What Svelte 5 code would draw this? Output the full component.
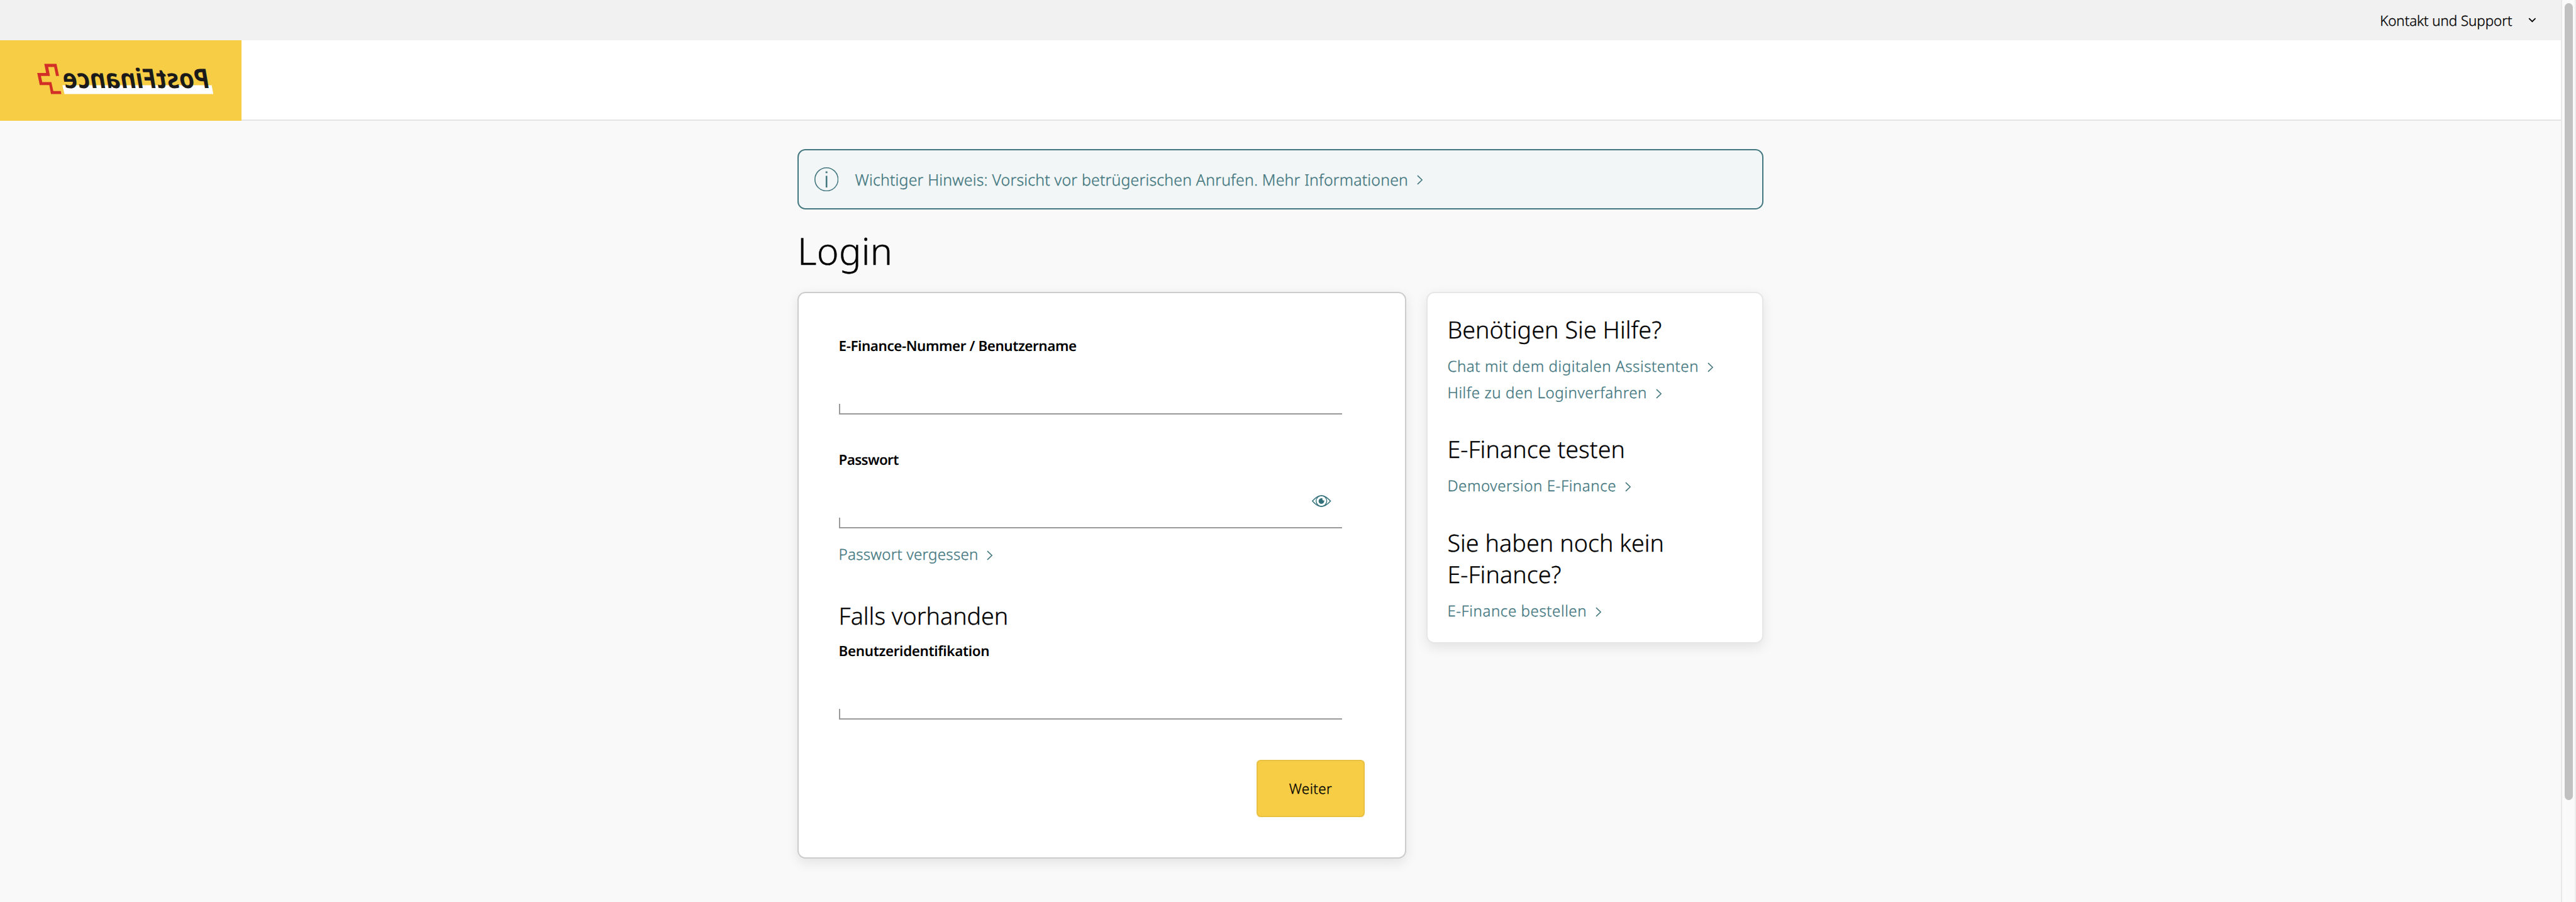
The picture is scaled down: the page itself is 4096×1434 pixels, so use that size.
<script>
  const help = [
    { title: ['Benötigen Sie Hilfe?'], links: ['Chat mit dem digitalen Assistenten', 'Hilfe zu den Loginverfahren'] },
    { title: ['E-Finance testen'], links: ['Demoversion E-Finance'] },
    { title: ['Sie haben noch kein', 'E-Finance?'], links: ['E-Finance bestellen'] }
  ];
</script>

{#snippet chevron()}
  <svg class="chevron" viewBox="0 0 12 20" aria-hidden="true">
    <path d="M1.2 1.4 L10.2 10 L1.2 18.6" fill="none" stroke="currentColor" stroke-width="2" />
  </svg>
{/snippet}

<div class="window">
  <div class="page">
    <div class="topbar">
      <span>Kontakt und Support</span>
      <svg class="down" viewBox="0 0 16 10" aria-hidden="true">
        <path d="M1.5 1.5 L8 7.8 L14.5 1.5" fill="none" stroke="currentColor" stroke-width="2.2" />
      </svg>
    </div>

    <header>
      <svg class="logo" viewBox="0 0 480 160" role="img" aria-label="PostFinance">
        <polygon fill="#fff" points="124,89.3 420.7,89.3 424,107 128,107" />
        <polygon
          fill="#d22f27"
          points="88,47 112.3,47 117.3,71 111.3,71 107.7,53 95.7,53 99.3,71 81.3,71 84,83 102,83 106,101 120.7,101 122,107 101.3,107 98,89 79,89 74,65 91.7,65"
        />
        <text
          class="wordmark"
          transform="translate(418.6 95.3) scale(-1 1) skewX(-9.5)"
          textLength="291"
          lengthAdjust="spacingAndGlyphs">PostFinance</text>
      </svg>
    </header>

    <main>
      <a class="alert" href="#hinweis">
        <svg class="info" viewBox="0 0 48 48" aria-hidden="true">
          <circle cx="24" cy="24" r="23" fill="none" stroke="currentColor" stroke-width="2" />
          <path d="M22.2 8h3.6v3.6h-3.6zM22.4 17h3.2v23h-3.2z" fill="currentColor" />
        </svg>
        <span>Wichtiger Hinweis: Vorsicht vor betrügerischen Anrufen. Mehr Informationen</span>
        {@render chevron()}
      </a>

      <h1>Login</h1>

      <div class="columns">
        <form class="card login">
          <label class="label wide" for="user">E-Finance-Nummer / Benutzername</label>
          <div class="field"><input id="user" type="text" /></div>

          <label class="label second" for="pass">Passwort</label>
          <div class="field">
            <input id="pass" type="password" />
            <svg class="eye" viewBox="0 0 38 24" aria-label="Passwort anzeigen">
              <g fill="none" stroke="currentColor">
                <path d="M1 12 C8 4 13 1.2 19 1.2 C25 1.2 30 4 37 12 C30 20 25 22.8 19 22.8 C13 22.8 8 20 1 12 Z" stroke-width="1.9" />
                <circle cx="19" cy="12" r="10.6" stroke-width="1.7" />
              </g>
              <path d="M21.6 7.1 A5.6 5.6 0 1 0 24.3 10.4 A1.9 1.9 0 0 1 21.6 7.1 Z" fill="currentColor" />
            </svg>
          </div>
          <a class="link forgot" href="#vergessen"><span>Passwort vergessen</span>{@render chevron()}</a>

          <h2 class="optional">Falls vorhanden</h2>
          <label class="label third" for="ident">Benutzeridentifikation</label>
          <div class="field"><input id="ident" type="text" /></div>

          <button type="button">Weiter</button>
        </form>

        <aside class="card help">
          {#each help as group}
            <section>
              <h2>{#each group.title as line}<span class="line">{line}</span>{/each}</h2>
              {#each group.links as link}
                <a class="link" href="#hilfe"><span>{link}</span>{@render chevron()}</a>
              {/each}
            </section>
          {/each}
        </aside>
      </div>
    </main>
  </div>
  <div class="scrollbar"><div class="thumb"></div></div>
</div>

<style>
  :global(body) {
    margin: 0;
    overflow: hidden;
  }
  .window {
    display: flex;
    width: 4096px;
    height: 1434px;
    overflow: hidden;
    background: #f9f9f9;
    color: #000;
    font-family: 'Noto Sans', 'Open Sans', sans-serif;
    font-weight: 300;
    text-rendering: geometricPrecision;
    -webkit-text-stroke: 0.35px currentColor;
  }
  .page {
    width: 4072px;
  }
  .scrollbar {
    box-sizing: border-box;
    width: 24px;
    padding: 5px 4px 0 4.4px;
    border-left: 2px solid #e8e8e8;
    border-right: 2px solid #ededed;
    background: #fafafa;
  }
  .thumb {
    width: 12.8px;
    height: 1267px;
    border-radius: 7px;
    background: #c1c1c1;
  }
  .topbar {
    display: flex;
    align-items: center;
    justify-content: flex-end;
    gap: 25.4px;
    height: 64px;
    padding-right: 39.4px;
    background: #f1f1f1;
    font-size: 22.4px;
    letter-spacing: -0.08px;
  }
  .down {
    width: 12.8px;
    height: 8px;
    margin-top: -1px;
  }
  header {
    box-sizing: border-box;
    height: 128px;
    border-bottom: 2px solid #e5e5e5;
    background: #fff;
  }
  .logo {
    display: block;
    width: 384px;
    height: 128px;
    background: #f7cd45;
  }
  .wordmark {
    font-size: 53.6px;
    font-weight: 700;
    fill: #1a1a1a;
    -webkit-text-stroke: 0;
  }
  main {
    width: 1536px;
    margin: 0 auto;
    padding-top: 44.8px;
  }
  a {
    color: #43777f;
    text-decoration: none;
  }
  .alert {
    box-sizing: border-box;
    display: flex;
    align-items: center;
    height: 96px;
    padding-left: 25px;
    border: 2px solid #43777f;
    border-radius: 12.8px;
    background: #f2f6f7;
    font-size: 24.8px;
    letter-spacing: 0.214px;
  }
  .alert span {
    padding-top: 2px;
  }
  .info {
    width: 38.4px;
    height: 38.4px;
    margin-right: 26px;
  }
  .chevron {
    width: 9.6px;
    height: 16px;
    margin: 3px 0 0 13.6px;
  }
  h1,
  h2 {
    margin: 0;
    font-weight: 300;
  }
  h1 {
    height: 131.2px;
    font-size: 59.2px;
    line-height: 132.8px;
    letter-spacing: 0.3px;
  }
  h2 {
    font-size: 37.6px;
    line-height: 49.6px;
    letter-spacing: 0.03px;
  }
  .columns {
    display: flex;
    align-items: flex-start;
    justify-content: space-between;
  }
  .card {
    box-sizing: border-box;
    border: 2px solid #ccc;
    border-radius: 12.8px;
    background: #fff;
    box-shadow: 0 6.4px 19.2px rgba(0, 0, 0, 0.09);
  }
  .login {
    display: flex;
    flex-direction: column;
    width: 968px;
    height: 901px;
    padding: 67px 63.6px 0;
  }
  .label {
    font-size: 22.4px;
    font-weight: 600;
    line-height: 33.6px;
    height: 32px;
    letter-spacing: -0.33px;
    -webkit-text-stroke: 0;
  }
  .wide {
    letter-spacing: -0.41px;
  }
  .second {
    margin-top: 54.4px;
    letter-spacing: -0.64px;
  }
  .third {
    margin-top: 14.4px;
  }
  .field {
    display: flex;
    align-items: center;
    width: 800px;
    height: 94.4px;
    background:
      linear-gradient(#999, #999) left bottom / 100% 2px no-repeat,
      linear-gradient(#999, #999) left bottom / 2px 17.6px no-repeat;
  }
  input {
    flex: 1;
    height: 60px;
    border: 0;
    outline: 0;
    background: none;
    font-size: 24px;
  }
  .eye {
    width: 30.4px;
    height: 19.2px;
    margin: 7px 16.8px 0 0;
    color: #32707a;
  }
  .link {
    display: flex;
    align-items: center;
    height: 41.6px;
    font-size: 24px;
    letter-spacing: 0.61px;
  }
  .forgot {
    margin-top: 21px;
    margin-bottom: -1px;
    letter-spacing: 0.3px;
  }
  .optional {
    margin-top: 53px;
    margin-bottom: -1px;
  }
  button {
    align-self: flex-end;
    width: 172.8px;
    height: 91.2px;
    margin-top: 64px;
    padding: 0;
    border: 2px solid #e8c042;
    border-radius: 6.4px;
    background: #f7cd45;
    color: #000;
    font: inherit;
    font-size: 22.4px;
    letter-spacing: 0.4px;
    text-rendering: inherit;
  }
  .help {
    display: flex;
    flex-direction: column;
    gap: 45.3px;
    width: 536px;
    height: 559.5px;
    padding: 34px 0 0 31.4px;
    border-color: #e6e6e6;
  }
  .help h2 {
    margin-bottom: 12.2px;
    letter-spacing: 0.1px;
  }
  .line {
    display: block;
  }
</style>
